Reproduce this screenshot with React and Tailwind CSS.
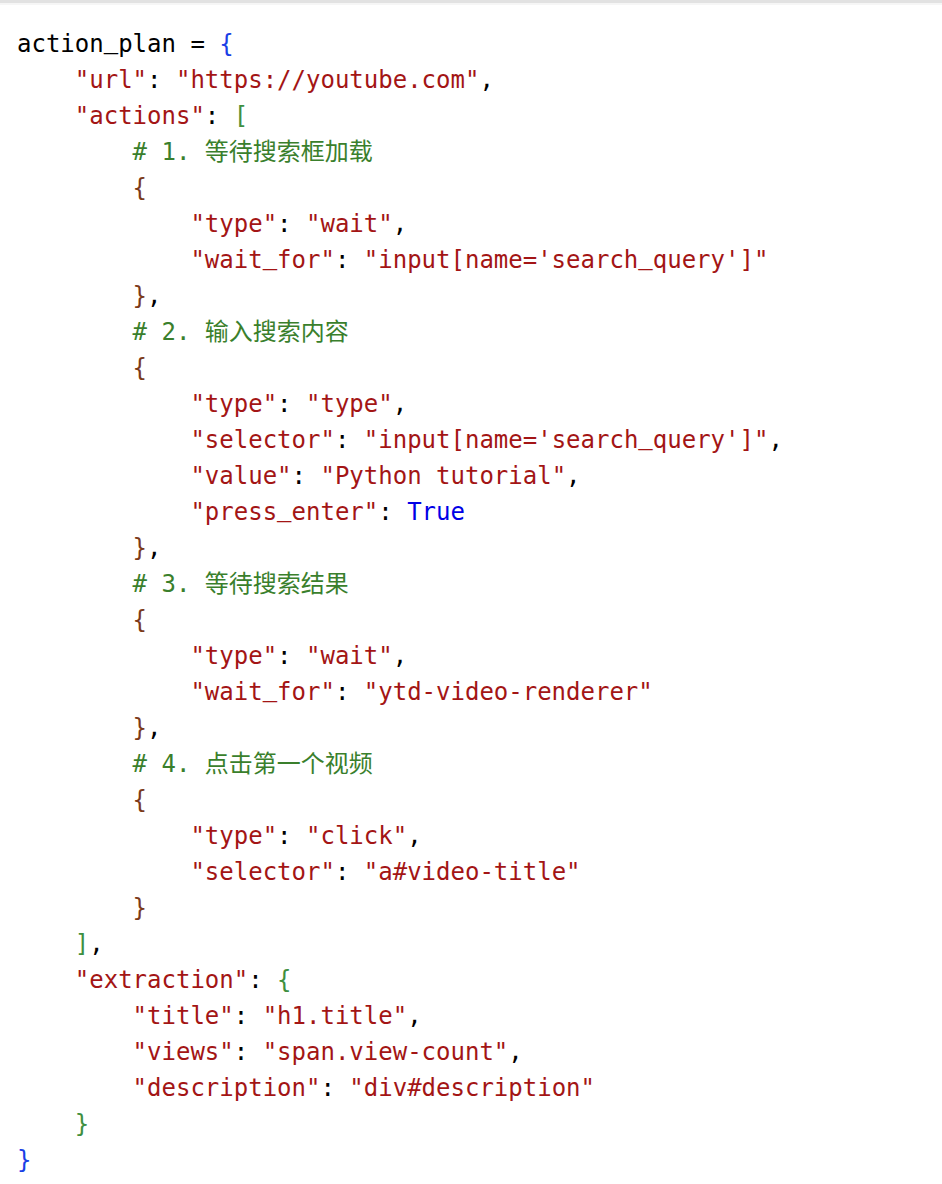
import React from "react";

const C = {
  plain: "text-black",
  str: "text-[#a31515]",
  com: "text-[#3a7f2c]",
  b1: "text-[#1a3fe6]",
  b2: "text-[#3f8f3f]",
  b3: "text-[#7b3a1a]",
  kw: "text-[#0000e6]",
};

const S = ({ t, children }) => {
  const parts = children.split("_");
  return (
    <span className={C[t]}>
      {parts.map((p, i) => (
        <React.Fragment key={i}>
          {i > 0 && (
            <span
              className="inline-block w-[0.602em]"
              style={{ fontFamily: '"Liberation Mono", monospace' }}
            >
              _
            </span>
          )}
          {p}
        </React.Fragment>
      ))}
    </span>
  );
};

const lines = [
  [["plain", "action_plan = "], ["b1", "{"]],
  [["plain", "    "], ["str", '"url"'], ["plain", ": "], ["str", '"https://youtube.com"'], ["plain", ","]],
  [["plain", "    "], ["str", '"actions"'], ["plain", ": "], ["b2", "["]],
  [["plain", "        "], ["com", "# 1. 等待搜索框加载"]],
  [["plain", "        "], ["b3", "{"]],
  [["plain", "            "], ["str", '"type"'], ["plain", ": "], ["str", '"wait"'], ["plain", ","]],
  [["plain", "            "], ["str", '"wait_for"'], ["plain", ": "], ["str", "\"input[name='search_query']\""]],
  [["plain", "        "], ["b3", "}"], ["plain", ","]],
  [["plain", "        "], ["com", "# 2. 输入搜索内容"]],
  [["plain", "        "], ["b3", "{"]],
  [["plain", "            "], ["str", '"type"'], ["plain", ": "], ["str", '"type"'], ["plain", ","]],
  [["plain", "            "], ["str", '"selector"'], ["plain", ": "], ["str", "\"input[name='search_query']\""], ["plain", ","]],
  [["plain", "            "], ["str", '"value"'], ["plain", ": "], ["str", '"Python tutorial"'], ["plain", ","]],
  [["plain", "            "], ["str", '"press_enter"'], ["plain", ": "], ["kw", "True"]],
  [["plain", "        "], ["b3", "}"], ["plain", ","]],
  [["plain", "        "], ["com", "# 3. 等待搜索结果"]],
  [["plain", "        "], ["b3", "{"]],
  [["plain", "            "], ["str", '"type"'], ["plain", ": "], ["str", '"wait"'], ["plain", ","]],
  [["plain", "            "], ["str", '"wait_for"'], ["plain", ": "], ["str", '"ytd-video-renderer"']],
  [["plain", "        "], ["b3", "}"], ["plain", ","]],
  [["plain", "        "], ["com", "# 4. 点击第一个视频"]],
  [["plain", "        "], ["b3", "{"]],
  [["plain", "            "], ["str", '"type"'], ["plain", ": "], ["str", '"click"'], ["plain", ","]],
  [["plain", "            "], ["str", '"selector"'], ["plain", ": "], ["str", '"a#video-title"']],
  [["plain", "        "], ["b3", "}"]],
  [["plain", "    "], ["b2", "]"], ["plain", ","]],
  [["plain", "    "], ["str", '"extraction"'], ["plain", ": "], ["b2", "{"]],
  [["plain", "        "], ["str", '"title"'], ["plain", ": "], ["str", '"h1.title"'], ["plain", ","]],
  [["plain", "        "], ["str", '"views"'], ["plain", ": "], ["str", '"span.view-count"'], ["plain", ","]],
  [["plain", "        "], ["str", '"description"'], ["plain", ": "], ["str", '"div#description"']],
  [["plain", "    "], ["b2", "}"]],
  [["b1", "}"]],
];

export default function App() {
  return (
    <div className="w-[942px] h-[1184px] bg-white overflow-hidden">
      <div className="h-[3px] bg-[#e2e2e2]" />
      <div className="h-[2px] bg-[#f6f6f6]" />
      <pre
        className="m-0 pl-[17px] pt-[21px] text-[24px] leading-[36px] text-black whitespace-pre"
        style={{ fontFamily: '"DejaVu Sans Mono", "Noto Sans CJK SC", monospace' }}
      >
        {lines.map((ln, i) => (
          <div key={i} className="h-[36px]">
            {ln.map(([t, s], j) => (
              <S key={j} t={t}>{s}</S>
            ))}
          </div>
        ))}
      </pre>
    </div>
  );
}
